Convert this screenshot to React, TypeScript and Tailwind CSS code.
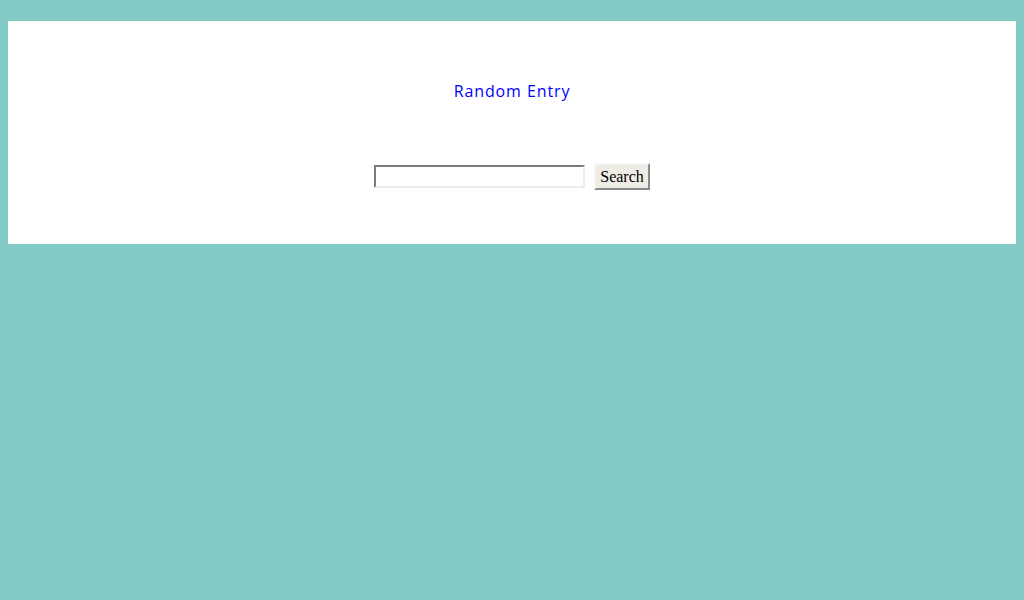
import React from 'react';

export default function App() {
  return (
    <div className="min-h-[600px] w-full bg-[#82cbc4] pt-[21px] px-2">
      <div className="bg-white h-[223px] flex flex-col items-center pt-[60px]">
        <a
          href="#"
          className="text-[16px] leading-[20px] text-[#0000ff] tracking-[0.9px]"
          style={{ fontFamily: '"Open Sans", Lato, sans-serif' }}
        >
          Random Entry
        </a>
        <form className="flex items-center gap-[9px] mt-[62px]" onSubmit={(e) => e.preventDefault()}>
          <input
            type="text"
            className="w-[211px] h-[23px] bg-white border-2 border-t-[#7a7a7a] border-l-[#7a7a7a] border-b-[#ececec] border-r-[#ececec] outline-none"
          />
          <button
            type="submit"
            className="h-[27px] px-[4px] bg-[#efebe5] border-2 border-t-[#f6f6f6] border-l-[#f6f6f6] border-b-[#8a8a8a] border-r-[#8a8a8a] text-[16px] leading-none text-black"
            style={{ fontFamily: '"Liberation Serif", serif' }}
          >
            Search
          </button>
        </form>
      </div>
    </div>
  );
}
